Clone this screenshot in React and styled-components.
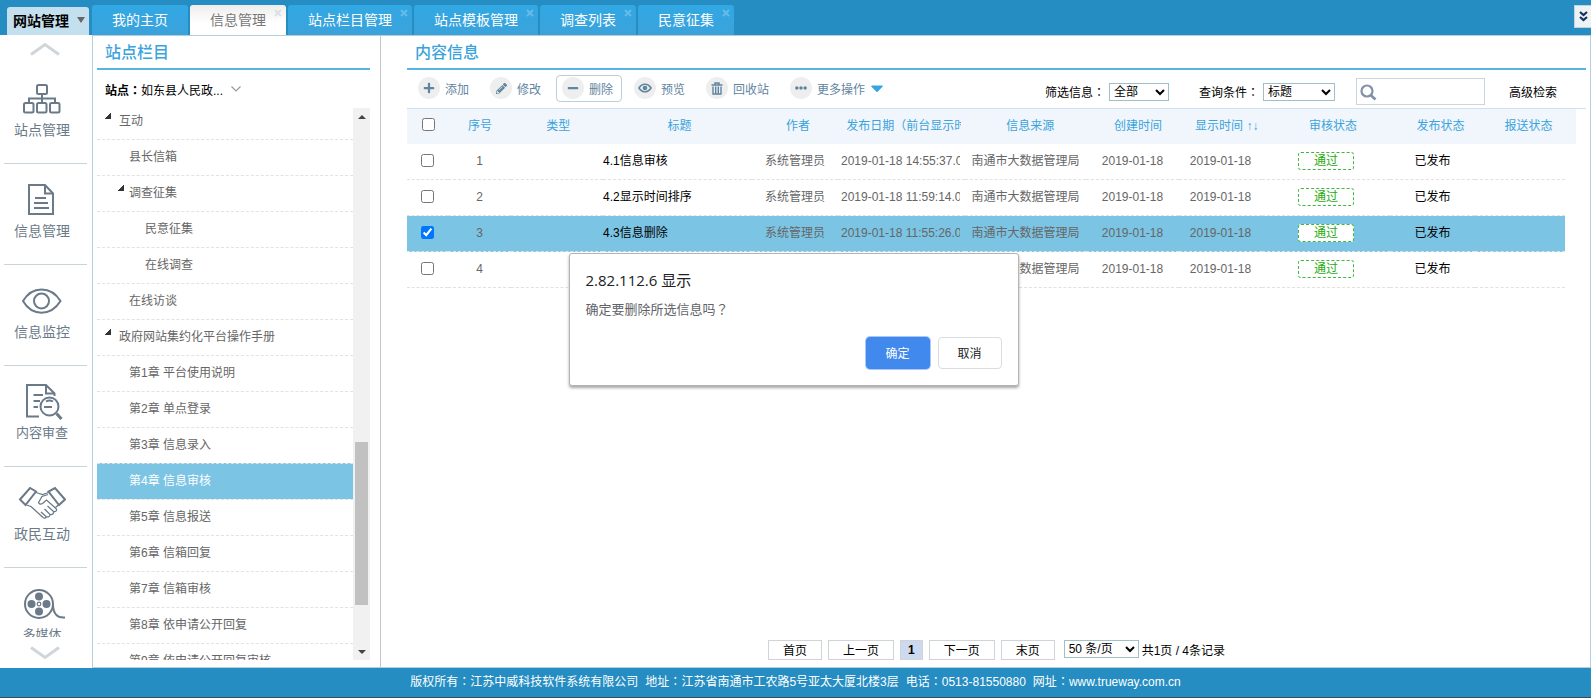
import React, { useState } from "react";
import styled, { createGlobalStyle, css } from "styled-components";
import {
  FaPlus,
  FaMinus,
  FaPencilAlt,
  FaEllipsisH,
  FaCaretDown,
} from "react-icons/fa";

const colors = {
  header: "#258dc2",
  accent: "#3aa3dc",
  line: "#56b4e6",
  border: "#b3cfdb",
  selected: "#7bc4e4",
  rail: "#6a7a88",
  tool: "#5f859f",
  text: "#666",
};

const tabs = [
  { label: "我的主页", fixed: true },
  { label: "信息管理" },
  { label: "站点栏目管理" },
  { label: "站点模板管理" },
  { label: "调查列表" },
  { label: "民意征集" },
];

const treeNodes = [
  { label: "互动", level: 0, open: true },
  { label: "县长信箱", level: 1 },
  { label: "调查征集", level: 1, open: true },
  { label: "民意征集", level: 2 },
  { label: "在线调查", level: 2 },
  { label: "在线访谈", level: 1 },
  { label: "政府网站集约化平台操作手册", level: 0, open: true },
  { label: "第1章 平台使用说明", level: 1 },
  { label: "第2章 单点登录", level: 1 },
  { label: "第3章 信息录入", level: 1 },
  { label: "第4章 信息审核", level: 1 },
  { label: "第5章 信息报送", level: 1 },
  { label: "第6章 信箱回复", level: 1 },
  { label: "第7章 信箱审核", level: 1 },
  { label: "第8章 依申请公开回复", level: 1 },
  { label: "第9章 依申请公开回复审核", level: 1 },
];

const columns = [
  { label: "", width: 41 },
  { label: "序号", width: 63 },
  { label: "类型", width: 92 },
  { label: "标题", width: 149 },
  { label: "作者", width: 86 },
  { label: "发布日期（前台显示时间）", width: 127, clip: true },
  { label: "信息来源", width: 121 },
  { label: "创建时间", width: 93 },
  { label: "显示时间 ↑↓", width: 83 },
  { label: "审核状态", width: 128 },
  { label: "发布状态", width: 85 },
  { label: "报送状态", width: 90 },
];

const totalWidth = columns.reduce((sum, column) => sum + column.width, 0);

const rows = [
  { id: 1, title: "4.1信息审核", published: "2019-01-18 14:55:37.0" },
  { id: 2, title: "4.2显示时间排序", published: "2019-01-18 11:59:14.0" },
  { id: 3, title: "4.3信息删除", published: "2019-01-18 11:55:26.0" },
  { id: 4, title: "", published: "" },
];

const contacts = [
  ["版权所有", "江苏中威科技软件系统有限公司"],
  ["地址", "江苏省南通市工农路5号亚太大厦北楼3层"],
  ["电话", "0513-81550880"],
  ["网址", "www.trueway.com.cn"],
];

// Icons

const SiteIcon = () => (
  <RailSvg>
    <rect x="19" y="4" width="10" height="9" rx="1.5" />
    <rect x="6" y="22" width="9.5" height="9.5" rx="1.5" />
    <rect x="19" y="22" width="9.5" height="9.5" rx="1.5" />
    <rect x="32" y="22" width="9.5" height="9.5" rx="1.5" />
    <path d="M24 13v9M11 22v-4.5h26V22" />
  </RailSvg>
);

const DocumentIcon = () => (
  <RailSvg>
    <path d="M11 3h16l8 8.500V32H11z" />
    <path d="M27 3v8.500h8M17 16h11M16 21h14M16 26h15" />
  </RailSvg>
);

const EyeIcon = () => (
  <RailSvg>
    <path d="M5 18C14 2.500 33 2.500 42.500 18C33 33.500 14 33.500 5 18z" />
    <circle cx="23.500" cy="18" r="7.500" />
  </RailSvg>
);

const ReviewIcon = () => (
  <RailSvg>
    <path d="M21 32.500H9V1h19l8.500 8.500V12M28 1v8.500h8.500" />
    <path d="M15.500 11H25M15.500 17H22M15.500 23H20M26 23h8M28 17.500q3.500-2 7 0" />
    <circle cx="31.500" cy="22.500" r="9" />
    <path d="M38.500 29.500L43.500 35" strokeWidth="3" />
  </RailSvg>
);

const HandshakeIcon = () => (
  <RailSvg>
    <path d="M2 14.500L12 3L18 6.500L7.500 20zM47 14.500L37 3L30.500 6.500L41 20z" />
    <g strokeWidth="1.300">
      <path d="M18 7.500L24.500 9.500L30.500 7.500M30 9.500L24 11.500L20.500 17.500Q21.500 20 24.500 18.500L28.500 15L38.500 24" />
      <path d="M8.500 20L13 21.500L25 32.500Q27 34 28.500 32M40.500 20L37.500 22.500" />
      <path d="M38.500 24Q39 27 35.500 26.500L29.500 21M35.500 26.500Q36 30 32 29.500L26.500 24M32 29.500Q31.500 33 28 31.500L23 27" />
    </g>
  </RailSvg>
);

const FilmIcon = () => (
  <RailSvg>
    <circle cx="21" cy="18" r="14" />
    <g fill="currentColor" stroke="none">
      <circle cx="21" cy="10.500" r="4" />
      <circle cx="21" cy="25.500" r="4" />
      <circle cx="13.500" cy="18" r="4" />
      <circle cx="28.500" cy="18" r="4" />
    </g>
    <circle cx="21" cy="18" r="1.800" strokeWidth="1.200" />
    <path d="M35 18Q35 32.500 47 31.500" />
  </RailSvg>
);

const PreviewIcon = () => (
  <svg width="14" height="10" viewBox="0 0 14 10" aria-hidden="true">
    <path
      d="M1 5C4 0 10 0 13 5C10 10 4 10 1 5z"
      fill="none"
      stroke="currentColor"
      strokeWidth="1.600"
    />
    <circle cx="7" cy="5" r="2.300" fill="currentColor" />
  </svg>
);

const TrashIcon = () => (
  <svg
    width="12"
    height="13"
    viewBox="0 0 12 13"
    fill="none"
    stroke="currentColor"
    aria-hidden="true"
  >
    <path d="M.5 3h11M4 2.500V1h4v1.500" strokeWidth="1.500" />
    <path d="M2 4.500V12h8V4.500M4.700 4.500V12M7.300 4.500V12" strokeWidth="1.400" />
  </svg>
);

const modules = [
  { label: "站点管理", icon: SiteIcon },
  { label: "信息管理", icon: DocumentIcon },
  { label: "信息监控", icon: EyeIcon },
  { label: "内容审查", icon: ReviewIcon, small: true },
  { label: "政民互动", icon: HandshakeIcon },
  { label: "多媒体", icon: FilmIcon, small: true },
];

const tools = [
  { label: "添加", icon: <FaPlus size={12} /> },
  { label: "修改", icon: <FaPencilAlt size={11} /> },
  { label: "删除", icon: <FaMinus size={12} />, active: true },
  { label: "预览", icon: <PreviewIcon /> },
  { label: "回收站", icon: <TrashIcon /> },
  { label: "更多操作", icon: <FaEllipsisH size={12} />, menu: true },
];

const Columns = () => (
  <colgroup>
    {columns.map((column, index) => (
      <Col key={index} $width={column.width} />
    ))}
  </colgroup>
);

const TopBar = () => (
  <Header>
    <SystemButton>
      网站管理
      <SystemCaret />
    </SystemButton>
    <TabList>
      {tabs.map((tab) => (
        <TabItem key={tab.label}>
          <Tab $active={tab.label === "信息管理"}>{tab.label}</Tab>
          {!tab.fixed && (
            <TabClose
              aria-label={`关闭${tab.label}`}
              $active={tab.label === "信息管理"}
            >
              <svg width="8" height="8" viewBox="0 0 8 8">
                <path
                  d="M1 1l6 6M7 1l-6 6"
                  stroke="currentColor"
                  strokeWidth="1.800"
                />
              </svg>
            </TabClose>
          )}
        </TabItem>
      ))}
    </TabList>
    <CollapseButton aria-label="展开">
      <svg width="9" height="11" viewBox="0 0 9 11" fill="none">
        <path
          d="M1 1l3.500 3L8 1M1 6l3.500 3L8 6"
          stroke="#14305c"
          strokeWidth="2.200"
        />
      </svg>
    </CollapseButton>
  </Header>
);

const ModuleRail = () => (
  <Rail>
    <RailArrow aria-label="向上">
      <svg width="30" height="14" viewBox="0 0 30 14" fill="none">
        <path d="M1 12.500L15 2.500L29 12.500" stroke="#d0d5d9" strokeWidth="3" />
      </svg>
    </RailArrow>
    <RailList>
      {modules.map(({ label, icon: Icon, small }) => (
        <li key={label}>
          <RailButton>
            <Icon />
            <RailLabel $small={small}>{label}</RailLabel>
          </RailButton>
        </li>
      ))}
    </RailList>
    <RailArrow aria-label="向下" $bottom>
      <svg width="30" height="14" viewBox="0 0 30 14" fill="none">
        <path d="M1 1.500L15 11.500L29 1.500" stroke="#d0d5d9" strokeWidth="3" />
      </svg>
    </RailArrow>
  </Rail>
);

const SitePanel = () => (
  <Side>
    <PanelTitle>站点栏目</PanelTitle>
    <SiteLine>
      <b>
        站点<Mark>：</Mark>
      </b>
      <SiteButton>
        如东县人民政...
        <svg width="10" height="6" viewBox="0 0 10 6" fill="none">
          <path d="M.5 .5L5 5L9.500 .5" stroke="#999" strokeWidth="1.200" />
        </svg>
      </SiteButton>
    </SiteLine>
    <TreeArea>
      <TreeView>
        <Tree>
          {treeNodes.map((node) => (
            <li key={node.label}>
              <TreeNode
                $level={node.level}
                $selected={node.label === "第4章 信息审核"}
              >
                {node.open && <TreeArrow $space={node.level ? 5 : 8} />}
                {node.label}
              </TreeNode>
            </li>
          ))}
        </Tree>
      </TreeView>
      <ScrollBar>
        <ScrollButton aria-label="上滚">
          <ScrollCaret $up />
        </ScrollButton>
        <ScrollTrack>
          <ScrollThumb />
        </ScrollTrack>
        <ScrollButton aria-label="下滚">
          <ScrollCaret />
        </ScrollButton>
      </ScrollBar>
    </TreeArea>
  </Side>
);

const Toolbar = () => (
  <ToolbarRow>
    <ToolGroup>
      {tools.map((tool) => (
        <ToolButton key={tool.label} $active={tool.active}>
          <ToolCircle>{tool.icon}</ToolCircle>
          {tool.label}
          {tool.menu && <MenuCaret />}
        </ToolButton>
      ))}
    </ToolGroup>
    <FilterGroup>
      <Field>
        <label htmlFor="filter">
          筛选信息<Mark>：</Mark>
        </label>
        <FilterSelect id="filter" $width={60}>
          <option>全部</option>
        </FilterSelect>
      </Field>
      <Field>
        <label htmlFor="condition">
          查询条件<Mark>：</Mark>
        </label>
        <FilterSelect id="condition" $width={72}>
          <option>标题</option>
        </FilterSelect>
      </Field>
      <SearchBox>
        <svg width="17" height="17" viewBox="0 0 17 17" fill="none">
          <circle cx="7" cy="7" r="5.500" stroke="#8391a8" strokeWidth="2.200" />
          <path d="M10.500 11L15.500 15.500" stroke="#8391a8" strokeWidth="2.800" />
        </svg>
        <SearchInput type="text" aria-label="搜索" />
      </SearchBox>
      <AdvancedLink href="#advanced">高级检索</AdvancedLink>
    </FilterGroup>
  </ToolbarRow>
);

const InfoTable = () => {
  const [checked, setChecked] = useState([3]);

  const toggle = (id) =>
    setChecked((ids) =>
      ids.includes(id) ? ids.filter((item) => item !== id) : [...ids, id]
    );

  const toggleAll = () =>
    setChecked((ids) =>
      ids.length === rows.length ? [] : rows.map((row) => row.id)
    );

  return (
    <>
      <HeadBar>
        <Table>
          <Columns />
          <thead>
            <tr>
              {columns.map((column, index) => (
                <HeadCell key={index} $clip={column.clip}>
                  {index === 0 ? (
                    <Checkbox
                      type="checkbox"
                      aria-label="全选"
                      checked={checked.length === rows.length}
                      onChange={toggleAll}
                    />
                  ) : (
                    <ClipText $left={column.clip}>{column.label}</ClipText>
                  )}
                </HeadCell>
              ))}
            </tr>
          </thead>
        </Table>
      </HeadBar>
      <BodyBar>
        <Table>
          <Columns />
          <tbody>
            {rows.map((row) => (
              <BodyRow key={row.id} $selected={checked.includes(row.id)}>
                <Cell>
                  <Checkbox
                    type="checkbox"
                    aria-label={`选择第${row.id}条`}
                    checked={checked.includes(row.id)}
                    onChange={() => toggle(row.id)}
                  />
                </Cell>
                <Cell>{row.id}</Cell>
                <Cell />
                <Cell $left $dark>
                  {row.title}
                </Cell>
                <Cell>系统管理员</Cell>
                <Cell $clip>
                  <ClipText $left>{row.published}</ClipText>
                </Cell>
                <Cell>南通市大数据管理局</Cell>
                <Cell>2019-01-18</Cell>
                <Cell>2019-01-18</Cell>
                <Cell>
                  <StatusBadge>通过</StatusBadge>
                </Cell>
                <Cell $dark>已发布</Cell>
                <Cell />
              </BodyRow>
            ))}
          </tbody>
        </Table>
      </BodyBar>
    </>
  );
};

const Pagination = () => (
  <Pager>
    <PageButton>首页</PageButton>
    <PageButton>上一页</PageButton>
    <PageButton $current>1</PageButton>
    <PageButton>下一页</PageButton>
    <PageButton>末页</PageButton>
    <PageSize>
      <FilterSelect aria-label="每页条数" $width={75}>
        <option>50 条/页</option>
      </FilterSelect>
      共1页 / 4条记录
    </PageSize>
  </Pager>
);

const ConfirmDialog = () => (
  <Dialog role="dialog" aria-labelledby="dialog-title">
    <DialogTitle id="dialog-title">2.82.112.6 显示</DialogTitle>
    <DialogText>
      确定要删除所选信息吗<Mark>？</Mark>
    </DialogText>
    <DialogActions>
      <DialogButton $primary>确定</DialogButton>
      <DialogButton>取消</DialogButton>
    </DialogActions>
  </Dialog>
);

const App = () => (
  <Page lang="zh-CN">
    <GlobalStyle />
    <TopBar />
    <Body>
      <ModuleRail />
      <SitePanel />
      <Main>
        <PanelTitle>内容信息</PanelTitle>
        <Toolbar />
        <InfoTable />
        <Pagination />
      </Main>
    </Body>
    <Footer>
      {contacts.map(([name, value]) => (
        <span key={name}>
          {name}
          <Mark>：</Mark>
          {value}
        </span>
      ))}
    </Footer>
    <ConfirmDialog />
  </Page>
);

// Styled Components

const GlobalStyle = createGlobalStyle`
  * {
    box-sizing: border-box;
  }

  body {
    margin: 0;
    background: #fff;
    font-family: "Liberation Sans", "Noto Sans CJK SC", sans-serif;
    font-size: 12px;
    color: #000;
  }

  button,
  input,
  select {
    font: inherit;
    color: inherit;
  }

  button {
    padding: 0;
    border: none;
    background: none;
    cursor: pointer;
    white-space: nowrap;
  }

  ul {
    margin: 0;
    padding: 0;
    list-style: none;
  }
`;

const Page = styled.div`
  display: flex;
  flex-direction: column;
  height: 100vh;
  overflow: hidden;
`;

// full-width punctuation centred in its square
const Mark = styled.span.attrs({ lang: "zh-TW" })`
  font-family: "Noto Sans CJK TC", sans-serif;
  line-height: 1;
`;

const Header = styled.header`
  display: flex;
  align-items: flex-end;
  height: 35px;
  padding-left: 7px;
  background: ${colors.header};
`;

const SystemButton = styled.button`
  display: flex;
  align-items: center;
  gap: 8px;
  height: 28px;
  padding: 0 4px 2px 6px;
  border-radius: 3px 3px 0 0;
  background: #c4dfee;
  font-size: 14px;
  font-weight: bold;
`;

const SystemCaret = styled.span`
  border: 4px solid transparent;
  border-top: 6px solid #666;
  border-bottom: none;
`;

const TabList = styled.ul`
  display: flex;
  flex: 1;
  gap: 2px;
  margin-left: 3px;
`;

const TabItem = styled.li`
  position: relative;
`;

const Tab = styled.button`
  height: 30px;
  padding: 0 20px 3px;
  border-radius: 3px 3px 0 0;
  background: linear-gradient(#31a8e4, #3ba2da);
  color: #fff;
  font-size: 14px;

  ${({ $active }) =>
    $active &&
    css`
      background: linear-gradient(#ededed, #fff 60%);
      color: #777;
    `}
`;

const TabClose = styled.button`
  position: absolute;
  top: 4px;
  right: 4px;
  display: flex;
  color: ${({ $active }) => ($active ? "#dcdfe1" : "#68bce8")};
`;

const CollapseButton = styled.button`
  display: flex;
  align-items: center;
  justify-content: center;
  align-self: flex-start;
  width: 17px;
  height: 23px;
  margin-top: 5px;
  border: 1px solid #c3d3dc;
  border-right: none;
  background: #edf2f5;
`;

const Body = styled.div`
  display: flex;
  flex: 1;
  min-height: 0;
`;

const Rail = styled.nav`
  display: flex;
  flex: none;
  flex-direction: column;
  width: 92px;
  padding: 0 4px;
`;

const RailArrow = styled.button`
  display: flex;
  flex: none;
  align-items: center;
  justify-content: center;
  height: ${({ $bottom }) => ($bottom ? 31 : 28)}px;
  padding-right: 3px;
`;

const RailList = styled.ul`
  flex: 1;
  min-height: 0;
  margin-right: 1px;
  overflow: hidden;
`;

const RailButton = styled.button`
  display: flex;
  flex-direction: column;
  align-items: center;
  gap: 3px;
  width: 100%;
  height: 101px;
  padding: 18px 7px 0 0;
  border-bottom: 1px solid #c9d3da;
  color: ${colors.rail};
`;

const RailSvg = styled.svg.attrs({
  width: 48,
  height: 36,
  viewBox: "0 0 48 36",
  fill: "none",
  stroke: "currentColor",
  strokeWidth: 2,
  "aria-hidden": true,
})`
  flex: none;
`;

const RailLabel = styled.span`
  font-size: ${({ $small }) => ($small ? 13 : 14)}px;
  line-height: 20px;
`;

const Side = styled.aside`
  display: flex;
  flex: none;
  flex-direction: column;
  width: 289px;
  padding: 0 10px 7px 4px;
  border: 1px solid ${colors.border};
  border-right-color: #c4c8ca;
`;

const PanelTitle = styled.h2`
  flex: none;
  height: 34px;
  margin: 0;
  padding-left: 8px;
  border-bottom: 2px solid ${colors.line};
  color: ${colors.accent};
  font-size: 16px;
  font-weight: 500;
  line-height: 33px;
`;

const SiteLine = styled.div`
  display: flex;
  flex: none;
  align-items: center;
  height: 38px;
  padding-left: 8px;
`;

const SiteButton = styled.button`
  display: flex;
  align-items: center;
  gap: 8px;
`;

const TreeArea = styled.div`
  display: flex;
  flex: 1;
  min-height: 0;
`;

const TreeView = styled.div`
  flex: 1;
  overflow: hidden;
`;

const Tree = styled.ul`
  margin-top: -5px;
`;

const treeIndent = [22, 32, 48];

const TreeNode = styled.button`
  display: flex;
  width: 100%;
  height: 36px;
  padding-left: ${({ $level }) => treeIndent[$level]}px;
  border-top: 1px dashed #e2e2e2;
  background: ${({ $selected }) => ($selected ? colors.selected : "none")};
  color: ${({ $selected }) => ($selected ? "#fff" : colors.text)};
  line-height: 35px;
`;

const TreeArrow = styled.span`
  flex: none;
  width: 6px;
  height: 6px;
  margin: 9px ${({ $space }) => $space}px 0 ${({ $space }) => -6 - $space}px;
  background: linear-gradient(135deg, transparent 45%, #333 46%);
`;

const ScrollBar = styled.div`
  display: flex;
  flex: none;
  flex-direction: column;
  width: 17px;
  background: #f1f1f1;
`;

const ScrollButton = styled.button`
  display: flex;
  align-items: center;
  justify-content: center;
  height: 17px;
`;

const ScrollCaret = styled.span`
  border: 4px solid transparent;
  ${({ $up }) =>
    $up
      ? "border-top: none; border-bottom-color: #444;"
      : "border-bottom: none; border-top-color: #444;"}
`;

const ScrollTrack = styled.div`
  display: flex;
  flex: 1;
  flex-direction: column;
  justify-content: flex-end;
  padding: 0 2px 38px;
`;

const ScrollThumb = styled.div`
  height: 34%;
  background: #c1c1c1;
`;

const Main = styled.main`
  display: flex;
  flex: 1;
  flex-direction: column;
  min-width: 0;
  padding: 0 4px 7px 26px;
  border: 1px solid ${colors.border};
  border-left: none;
`;

const ToolbarRow = styled.div`
  display: flex;
  flex: none;
  justify-content: space-between;
  height: 39px;
  padding: 0 29px 0 5px;
  border-bottom: 1px solid #cde1ee;
`;

const ToolGroup = styled.div`
  display: flex;
  align-items: flex-start;
  gap: 6px;
  padding-top: 5px;
`;

const ToolButton = styled.button`
  display: flex;
  align-items: center;
  gap: 5px;
  height: 27px;
  padding: 0 8px 1px 5px;
  border: 1px solid ${({ $active }) => ($active ? "#bccddb" : "transparent")};
  border-radius: 4px;
  color: ${colors.tool};
`;

const ToolCircle = styled.span`
  display: flex;
  align-items: center;
  justify-content: center;
  width: 22px;
  height: 22px;
  border-radius: 50%;
  background: #eee;
`;

const MenuCaret = styled(FaCaretDown)`
  width: 14px;
  height: 20px;
  color: #35a6e0;
`;

const FilterGroup = styled.div`
  display: flex;
  align-items: center;
  padding-top: 5px;
`;

const Field = styled.div`
  display: flex;
  align-items: center;
  gap: 4px;
  margin-right: 30px;

  & + & {
    margin-right: 21px;
  }
`;

const FilterSelect = styled.select`
  width: ${({ $width }) => $width}px;
  height: 18px;
  padding: 0;
  border: 1px solid #9fc0c9;
  border-radius: 0;
  background-color: #fff;
  line-height: 16px;
`;

const SearchBox = styled.div`
  display: flex;
  align-items: center;
  width: 129px;
  height: 27px;
  padding: 2px 0 0 3px;
  border: 1px solid #ccd5e0;

  svg {
    flex: none;
  }
`;

const SearchInput = styled.input`
  flex: 1;
  min-width: 0;
  border: none;
  outline: none;
`;

const AdvancedLink = styled.a`
  margin-left: 24px;
  color: #000;
  text-decoration: none;
`;

const HeadBar = styled.div`
  flex: none;
  margin-right: 10px;
  padding-right: 2px;
  background: #f0f6fb;
`;

const BodyBar = styled.div`
  flex: none;
  margin-right: 21px;
`;

const Table = styled.table`
  width: 100%;
  table-layout: fixed;
  border-spacing: 0;
`;

const Col = styled.col`
  width: ${({ $width }) => ($width / totalWidth) * 100}%;
`;

const HeadCell = styled.th`
  height: 35px;
  padding: ${({ $clip }) => ($clip ? "0 8px 2px 5px" : "0 0 2px")};
  color: ${colors.accent};
  font-weight: normal;
  line-height: 20px;
  white-space: nowrap;

  &:first-child {
    padding: 0 0 4px 2px;
  }
`;

const BodyRow = styled.tr`
  background: ${({ $selected }) => ($selected ? colors.selected : "#fff")};
`;

const Cell = styled.td`
  height: 36px;
  padding: ${({ $clip }) => ($clip ? "0 5px 2px 3px" : "0 0 2px")};
  border-bottom: 1px dashed #e6dfe0;
  color: ${({ $dark }) => ($dark ? "#000" : colors.text)};
  line-height: 20px;
  text-align: ${({ $left }) => ($left ? "left" : "center")};
  white-space: nowrap;
`;

const ClipText = styled.div`
  overflow: hidden;
  text-align: ${({ $left }) => ($left ? "left" : "center")};
`;

const Checkbox = styled.input`
  display: block;
  width: 13px;
  height: 13px;
  margin: 0 auto;
`;

const StatusBadge = styled.span`
  display: block;
  width: 56px;
  margin: 0 auto;
  padding-top: 1px;
  border: 1px dashed #3cb83c;
  border-radius: 3px;
  background: #fff;
  color: #1faa12;
  line-height: 15px;
`;

const Pager = styled.div`
  display: flex;
  align-items: center;
  justify-content: center;
  gap: 6px;
  margin-top: auto;
`;

const PageButton = styled.button`
  height: 20px;
  padding: 0 14px 2px;
  border: 1px solid #cfd4d8;

  ${({ $current }) =>
    $current &&
    css`
      padding: 0 7px;
      background: #ccd9ee;
      font-weight: bold;
    `}
`;

const PageSize = styled.div`
  display: flex;
  align-items: center;
  gap: 3px;
  margin-left: 3px;
  padding-bottom: 2px;
`;

const Footer = styled.footer`
  display: flex;
  flex: none;
  justify-content: center;
  gap: 7px;
  height: 30px;
  border-bottom: 1px solid #34505f;
  background: ${colors.header};
  color: #fff;
  line-height: 28px;
`;

const Dialog = styled.div`
  position: absolute;
  top: 253px;
  left: calc(50% - 227px);
  width: 450px;
  padding: 16px;
  border: 1px solid #b4b4b4;
  border-radius: 3px;
  background: #fff;
  box-shadow: 0 2px 3px rgba(0, 0, 0, 0.35);
`;

const DialogTitle = styled.h3`
  margin: 0 0 8px;
  color: #202124;
  font-family: "Open Sans", "Noto Sans CJK SC", sans-serif;
  font-size: 15px;
  font-weight: normal;
  line-height: 20px;
`;

const DialogText = styled.p`
  margin: 0 0 15px;
  color: #5f6368;
  font-size: 13px;
  line-height: 24px;
`;

const DialogActions = styled.div`
  display: flex;
  justify-content: flex-end;
  gap: 8px;
`;

const DialogButton = styled.button`
  width: 64px;
  height: 32px;
  padding-bottom: 2px;
  border: 1px solid #dadce0;
  border-radius: 4px;
  color: #202124;

  ${({ $primary }) =>
    $primary &&
    css`
      border-color: #4285f4;
      background: #4189ec;
      box-shadow: 0 0 0 1px #a9caf7;
      color: #fff;
    `}
`;

export default App;
